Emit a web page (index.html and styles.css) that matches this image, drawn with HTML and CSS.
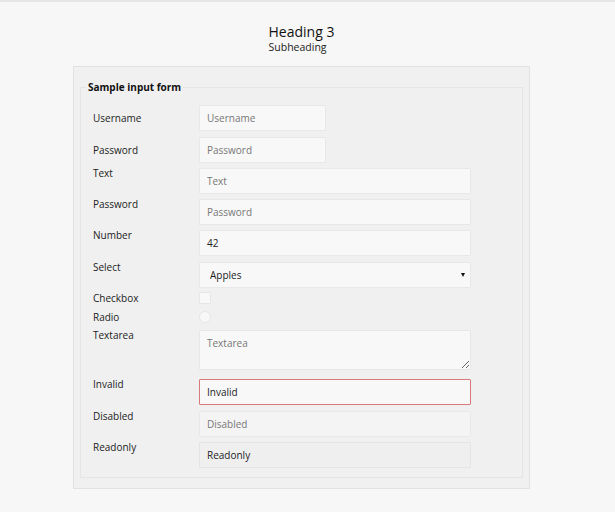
FILE: index.html
```html
<!DOCTYPE html>
<html>
<head>
<meta charset="utf-8">
<link rel="stylesheet" href="styles.css">
</head>
<body>
<div class="page">
  <header class="head">
    <div class="head-inner">
      <h3 class="title">Heading 3</h3>
      <div class="subtitle">Subheading</div>
    </div>
  </header>
  <div class="panel">
    <fieldset class="form">
      <legend class="legend">Sample input form</legend>
      <div class="rows">
        <div class="row center first"><label class="lbl">Username</label><input class="ctl short" type="text" placeholder="Username"></div>
        <div class="row center"><label class="lbl">Password</label><input class="ctl short" type="password" placeholder="Password"></div>
        <div class="row"><label class="lbl">Text</label><input class="ctl" type="text" placeholder="Text"></div>
        <div class="row"><label class="lbl">Password</label><input class="ctl" type="password" placeholder="Password"></div>
        <div class="row num-row"><label class="lbl">Number</label><input class="ctl" type="text" value="42"></div>
        <div class="row sel-row"><label class="lbl">Select</label><span class="sel-wrap"><select class="ctl sel"><option>Apples</option><option>Oranges</option></select><span class="caret"></span></span></div>
        <div class="row center small"><label class="lbl">Checkbox</label><input class="chk" type="checkbox"></div>
        <div class="row center small"><label class="lbl">Radio</label><input class="rad" type="radio"></div>
        <div class="row area-row"><label class="lbl">Textarea</label><textarea class="ctl area" placeholder="Textarea"></textarea></div>
        <div class="row inv-row"><label class="lbl">Invalid</label><input class="ctl invalid" type="text" value="Invalid"></div>
        <div class="row"><label class="lbl">Disabled</label><input class="ctl" type="text" placeholder="Disabled" disabled></div>
        <div class="row"><label class="lbl">Readonly</label><input class="ctl readonly" type="text" value="Readonly" readonly></div>
      </div>
    </fieldset>
  </div>
</div>
</body>
</html>
```
FILE: styles.css
```css
html, body {
  margin: 0;
  padding: 0;
}
body {
  background: #f7f7f7;
  border-top: 2px solid #e6e6e6;
  font-family: "Open Sans", "Noto Sans", sans-serif;
  font-size: 10px;
  color: #222;
  height: 510px;
}
.page {
  margin-left: 73px;
  width: 457px;
  padding-top: 21px;
}
.head {
  text-align: center;
}
.head-inner {
  display: inline-block;
  text-align: left;
}
.title {
  margin: 0;
  font-size: 14px;
  font-weight: normal;
  line-height: 18px;
  color: #111;
}
.subtitle {
  font-size: 10.5px;
  line-height: 12px;
  color: #222;
}
.panel {
  margin-top: 12px;
  background: #f0f0f0;
  border: 1px solid #e2e2e2;
  padding: 13px 6px 10px 6px;
}
.form {
  margin: 0;
  border: 1px solid #e5e5e5;
  padding: 0 12px 9px 12px;
}
.legend {
  font-weight: bold;
  font-size: 10px;
  padding: 0 2px;
  margin-left: -7px;
  color: #111;
}
.rows {
  display: flex;
  flex-direction: column;
  gap: 5px;
  padding-top: 11px;
}
.row {
  display: flex;
  align-items: flex-start;
}
.row.first {
  margin-bottom: 1px;
}
.row.center {
  align-items: center;
}
.row.num-row {
  margin-bottom: 1px;
}
.row.sel-row {
  margin-bottom: -1px;
}
.row.small {
  height: 12px;
  margin-bottom: 2px;
}
.row.small .lbl {
  line-height: 12px;
}
.row.area-row {
  margin-bottom: 4px;
}
.row.inv-row {
  margin-bottom: 1px;
}
.lbl {
  width: 106px;
  flex: none;
  line-height: 14px;
  margin-top: -2px;
  color: #222;
}
.row.center .lbl {
  margin-top: 0;
}
.ctl {
  box-sizing: border-box;
  width: 272px;
  height: 26px;
  margin: 0;
  padding: 0 7px;
  border: 1px solid #e8e8e8;
  border-radius: 1px;
  background: #f8f8f8;
  font-family: "Open Sans", "Noto Sans", sans-serif;
  font-size: 10px;
  color: #222;
  outline: none;
}
.ctl::placeholder {
  color: #777;
}
.ctl.short {
  width: 127px;
}
.sel-wrap {
  position: relative;
  display: block;
  width: 272px;
  height: 26px;
}
.sel {
  appearance: none;
  -webkit-appearance: none;
  padding-left: 10px;
  display: block;
}
.caret {
  position: absolute;
  right: 6px;
  top: 11px;
  width: 0;
  height: 0;
  border-left: 2px solid transparent;
  border-right: 2px solid transparent;
  border-top: 4px solid #111;
  pointer-events: none;
}
.chk, .rad {
  appearance: none;
  -webkit-appearance: none;
  box-sizing: border-box;
  width: 12px;
  height: 12px;
  margin: 0;
  border: 1px solid #e6e6e6;
  background: #f8f8f8;
}
.chk {
  border-radius: 1px;
}
.rad {
  border-radius: 50%;
}
.area {
  height: 40px;
  padding-top: 5px;
  resize: vertical;
  display: block;
}
.invalid {
  border-color: #d87a7c;
}
.ctl:disabled {
  background: #f4f4f4;
  border-color: #e8e8e8;
  color: #777;
}
.ctl:disabled::placeholder {
  color: #777;
}
.readonly {
  background: #efefef;
  border-color: #e4e4e4;
}
```
